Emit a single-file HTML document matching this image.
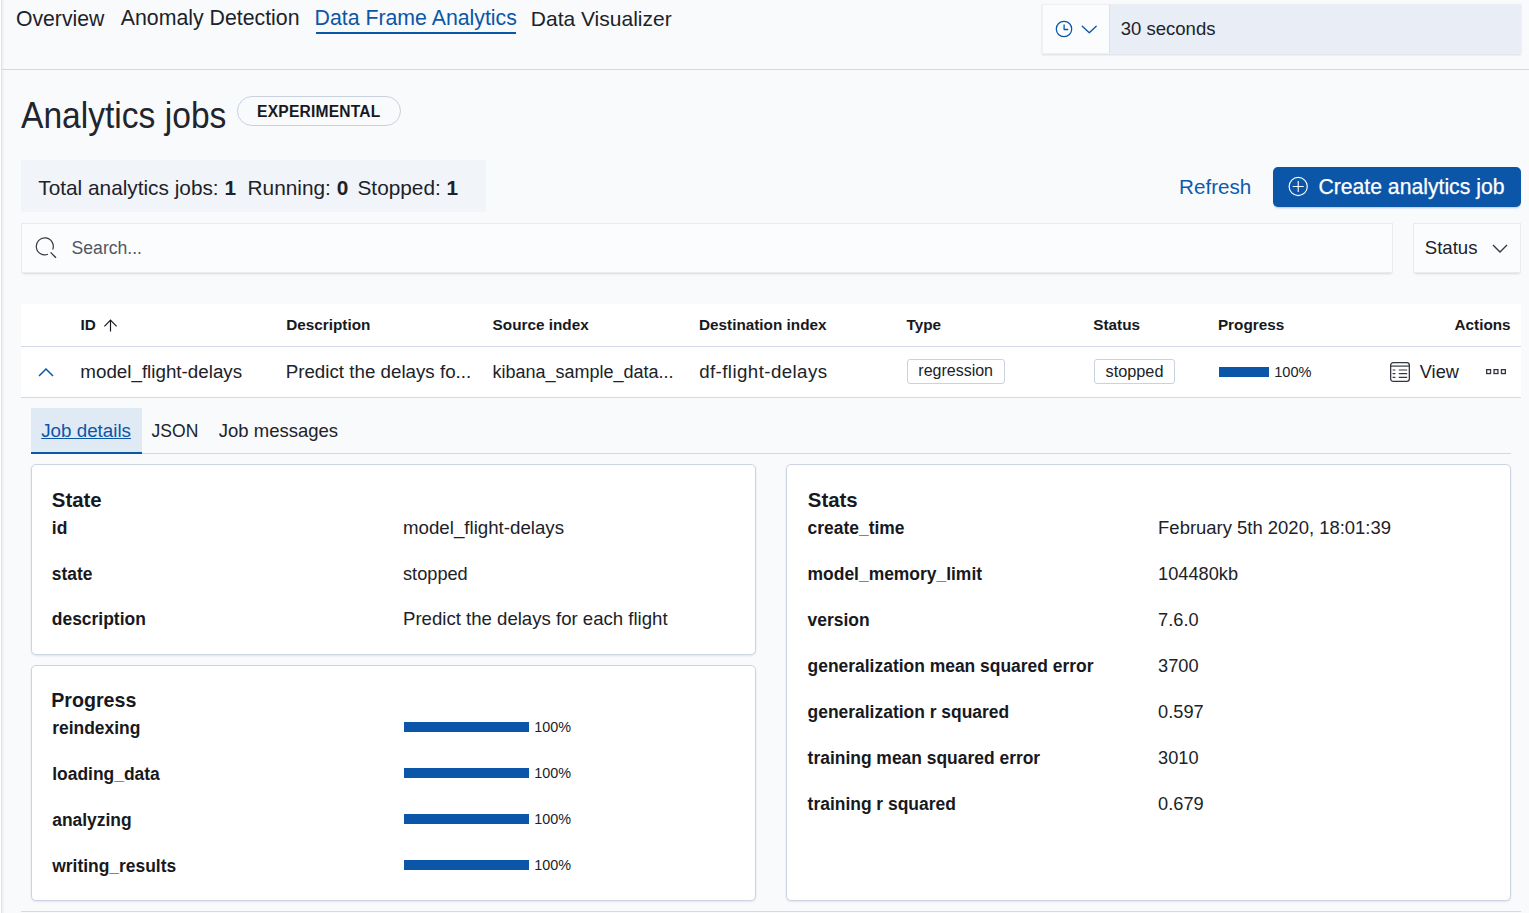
<!DOCTYPE html>
<html><head><meta charset="utf-8"><style>
html,body{margin:0;padding:0;}
body{width:1529px;height:913px;overflow:hidden;position:relative;background:#F9FAFC;font-family:"Liberation Sans",sans-serif;-webkit-font-smoothing:antialiased;}
.t{position:absolute;line-height:1;white-space:nowrap;}
.r{position:absolute;}
</style></head><body>
<div class="r" style="left:0px;top:0px;width:1px;height:913px;background:#fff"></div>
<div class="r" style="left:1px;top:0px;width:1px;height:913px;background:#DFE3EA"></div>
<div class="r" style="left:2px;top:0px;width:3px;height:913px;background:linear-gradient(90deg,rgba(152,162,179,.12),rgba(152,162,179,0))"></div>
<div class="t" style="left:16.00px;top:7.95px;font-size:21.2px;font-weight:400;color:#202229;">Overview</div>
<div class="t" style="left:120.80px;top:7.87px;font-size:21.3px;font-weight:400;color:#202229;">Anomaly Detection</div>
<div class="t" style="left:314.50px;top:7.87px;font-size:21.3px;font-weight:400;color:#0B56A8;">Data Frame Analytics</div>
<div class="r" style="left:316px;top:32px;width:200px;height:2px;background:#0B56A8"></div>
<div class="t" style="left:530.80px;top:8.12px;font-size:21px;font-weight:400;color:#202229;">Data Visualizer</div>
<div class="r" style="left:1042px;top:4px;width:479px;height:50px;background:#FBFCFD;box-shadow:0 1px 2px rgba(152,162,179,.35), inset 0 0 0 1px rgba(32,38,47,.06)"></div>
<div class="r" style="left:1109px;top:5px;width:412px;height:48px;background:#E9EDF5"></div>
<div class="r" style="left:1109px;top:5px;width:1px;height:48px;background:#DCE1EA"></div>
<svg class="r" style="left:1054.8px;top:20.1px" width="18" height="18" viewBox="0 0 18 18"><circle cx="9" cy="9" r="7.7" fill="none" stroke="#0B56A8" stroke-width="1.25"/><path d="M9.1 5V9.5H12.8" fill="none" stroke="#0B56A8" stroke-width="1.3" stroke-linecap="round" stroke-linejoin="round"/></svg>
<svg class="r" style="left:1080.5px;top:24.7px" width="17" height="10" viewBox="0 0 17 10"><path d="M1.3 1.3L8.3 7.8L15.2 1.3" fill="none" stroke="#0B56A8" stroke-width="1.35" stroke-linecap="round" stroke-linejoin="round"/></svg>
<div class="t" style="left:1120.80px;top:20.14px;font-size:18.5px;font-weight:400;color:#202229;">30 seconds</div>
<div class="r" style="left:1px;top:69px;width:1528px;height:1px;background:#D3DAE6"></div>
<div class="t" style="left:21.40px;top:97.73px;font-size:36px;font-weight:400;color:#22252c;transform:scaleX(0.933);transform-origin:0 0">Analytics jobs</div>
<div class="r" style="left:237px;top:96px;width:164px;height:30px;border:1px solid #C9D1DF;border-radius:15px;box-sizing:border-box"></div>
<div class="t" style="left:257.10px;top:103.69px;font-size:15.6px;font-weight:700;color:#17191E;letter-spacing:0.2px">EXPERIMENTAL</div>
<div class="r" style="left:21px;top:160px;width:465px;height:52px;background:#F1F4F9"></div>
<div class="t" style="left:38.30px;top:177.89px;font-size:20.8px;font-weight:400;color:#202229;">Total analytics jobs: <b>1</b></div>
<div class="t" style="left:247.60px;top:177.89px;font-size:20.8px;font-weight:400;color:#202229;">Running: <b>0</b></div>
<div class="t" style="left:357.50px;top:177.89px;font-size:20.8px;font-weight:400;color:#202229;">Stopped: <b>1</b></div>
<div class="t" style="left:1179.10px;top:176.66px;font-size:20.6px;font-weight:400;color:#0B5CAD;">Refresh</div>
<div class="r" style="left:1273px;top:167px;width:248px;height:40px;background:#0B56A8;border-radius:5px;box-shadow:0 2px 2px -1px rgba(11,86,168,.3)"></div>
<svg class="r" style="left:1288px;top:176px" width="21" height="21" viewBox="0 0 21 21"><circle cx="10.2" cy="10.5" r="9.1" fill="none" stroke="#fff" stroke-width="1.15"/><path d="M10.2 5V16M4.7 10.5H15.7" stroke="#fff" stroke-width="1.1"/></svg>
<div class="t" style="left:1318.40px;top:176.45px;font-size:21.2px;font-weight:400;color:#fff;-webkit-text-stroke:0.25px #fff">Create analytics job</div>
<div class="r" style="left:21px;top:223px;width:1372px;height:50px;background:#FBFCFD;box-shadow:0 1px 1px -1px rgba(152,162,179,.2),0 3px 2px -2px rgba(152,162,179,.35),inset 0 0 0 1px rgba(32,38,47,.08)"></div>
<svg class="r" style="left:35px;top:237px" width="24" height="24" viewBox="0 0 24 24"><path d="M17.68 12.58A8.5 8.5 0 1 0 12.98 17.28" fill="none" stroke="#343741" stroke-width="1.2"/><path d="M15.6 15.4L21 20.8" stroke="#343741" stroke-width="1.3"/></svg>
<div class="t" style="left:71.60px;top:240.30px;font-size:17.6px;font-weight:400;color:#505663;">Search...</div>
<div class="r" style="left:1413px;top:223px;width:108px;height:50px;background:#FBFCFD;box-shadow:0 1px 1px -1px rgba(152,162,179,.2),0 3px 2px -2px rgba(152,162,179,.35),inset 0 0 0 1px rgba(32,38,47,.08)"></div>
<div class="t" style="left:1424.80px;top:239.16px;font-size:18.6px;font-weight:400;color:#202229;">Status</div>
<svg class="r" style="left:1492px;top:243.5px" width="16" height="10" viewBox="0 0 16 10"><path d="M1 1L8 8L15 1" fill="none" stroke="#343741" stroke-width="1.4"/></svg>
<div class="r" style="left:21px;top:304px;width:1500px;height:94px;background:#fff"></div>
<div class="r" style="left:21px;top:346px;width:1500px;height:1px;background:#D3DAE6"></div>
<div class="r" style="left:21px;top:397px;width:1500px;height:1px;background:#D3DAE6"></div>
<div class="t" style="left:80.50px;top:317.15px;font-size:15.3px;font-weight:700;color:#17191E;">ID</div>
<div class="t" style="left:286.20px;top:317.15px;font-size:15.3px;font-weight:700;color:#17191E;">Description</div>
<div class="t" style="left:492.60px;top:317.15px;font-size:15.3px;font-weight:700;color:#17191E;">Source index</div>
<div class="t" style="left:699.00px;top:317.15px;font-size:15.3px;font-weight:700;color:#17191E;">Destination index</div>
<div class="t" style="left:906.50px;top:317.15px;font-size:15.3px;font-weight:700;color:#17191E;">Type</div>
<div class="t" style="left:1093.30px;top:317.15px;font-size:15.3px;font-weight:700;color:#17191E;">Status</div>
<div class="t" style="left:1217.90px;top:317.15px;font-size:15.3px;font-weight:700;color:#17191E;">Progress</div>
<div class="t" style="left:1454.50px;top:317.15px;font-size:15.3px;font-weight:700;color:#17191E;">Actions</div>
<svg class="r" style="left:103px;top:318.5px" width="15" height="13" viewBox="0 0 15 13"><path d="M7.5 12.5V1.2M1.4 7.3L7.5 1.2L13.6 7.3" fill="none" stroke="#1A1C21" stroke-width="1.2"/></svg>
<svg class="r" style="left:37.8px;top:366.6px" width="16" height="10" viewBox="0 0 16 10"><path d="M1 9L8 2L15 9" fill="none" stroke="#0B56A8" stroke-width="1.5"/></svg>
<div class="t" style="left:80.30px;top:362.69px;font-size:18.8px;font-weight:400;color:#202229;">model_flight-delays</div>
<div class="t" style="left:285.70px;top:362.73px;font-size:18.75px;font-weight:400;color:#202229;">Predict the delays fo...</div>
<div class="t" style="left:492.40px;top:363.36px;font-size:18px;font-weight:400;color:#202229;">kibana_sample_data...</div>
<div class="t" style="left:699.20px;top:362.77px;font-size:18.7px;font-weight:400;color:#202229;letter-spacing:0.42px">df-flight-delays</div>
<div class="r" style="left:907px;top:359px;width:98px;height:25px;border:1px solid #CAD2E0;border-radius:3px;box-sizing:border-box;background:#fff"></div>
<div class="t" style="left:918.30px;top:363.46px;font-size:16px;font-weight:400;color:#202229;">regression</div>
<div class="r" style="left:1094px;top:359px;width:81px;height:25px;border:1px solid #CAD2E0;border-radius:3px;box-sizing:border-box;background:#fff"></div>
<div class="t" style="left:1105.50px;top:363.20px;font-size:16.3px;font-weight:400;color:#202229;">stopped</div>
<div class="r" style="left:1219px;top:367px;width:50px;height:10px;background:#0B56A8"></div>
<div class="t" style="left:1274.20px;top:364.54px;font-size:14.6px;font-weight:400;color:#202229;">100%</div>
<svg class="r" style="left:1390px;top:362px" width="20" height="20" viewBox="0 0 20 20"><rect x="0.65" y="0.65" width="18.7" height="18.7" rx="2.6" fill="none" stroke="#343741" stroke-width="1.3"/><path d="M0.8 4.1H19.2" stroke="#343741" stroke-width="1.2"/><path d="M2.6 8H5.4M8.8 8H17.2M2.6 11.6H5.4M8.8 11.6H17.2M2.6 15.4H5.4M8.8 15.4H17.2" stroke="#343741" stroke-width="1.1"/></svg>
<div class="t" style="left:1419.80px;top:362.59px;font-size:18.2px;font-weight:400;color:#202229;">View</div>
<svg class="r" style="left:1486px;top:369.4px" width="21" height="6" viewBox="0 0 21 6"><rect x="0.65" y="0.65" width="3.9" height="3.9" fill="none" stroke="#343741" stroke-width="1.3"/><rect x="8.05" y="0.65" width="3.9" height="3.9" fill="none" stroke="#343741" stroke-width="1.3"/><rect x="15.45" y="0.65" width="3.9" height="3.9" fill="none" stroke="#343741" stroke-width="1.3"/></svg>
<div class="r" style="left:31px;top:408px;width:111px;height:46px;background:#E0EAF5"></div>
<div class="r" style="left:31px;top:453px;width:1480px;height:1px;background:#D3DAE6"></div>
<div class="r" style="left:31px;top:452px;width:111px;height:2px;background:#0B56A8"></div>
<div class="t" style="left:41.20px;top:422.29px;font-size:18.8px;font-weight:400;color:#0B56A8;text-decoration:underline;text-underline-offset:1px">Job details</div>
<div class="t" style="left:151.60px;top:422.99px;font-size:17.5px;font-weight:400;color:#202229;">JSON</div>
<div class="t" style="left:218.80px;top:422.14px;font-size:18.5px;font-weight:400;color:#202229;">Job messages</div>
<div class="r" style="left:31px;top:464px;width:725px;height:191px;background:#fff;border:1px solid #CDD4E1;border-radius:5px;box-sizing:border-box;box-shadow:0 1px 2px rgba(152,162,179,.25)"></div>
<div class="r" style="left:31px;top:665px;width:725px;height:236px;background:#fff;border:1px solid #CDD4E1;border-radius:5px;box-sizing:border-box;box-shadow:0 1px 2px rgba(152,162,179,.25)"></div>
<div class="r" style="left:786px;top:464px;width:725px;height:437px;background:#fff;border:1px solid #CDD4E1;border-radius:5px;box-sizing:border-box;box-shadow:0 1px 2px rgba(152,162,179,.25)"></div>
<div class="t" style="left:51.80px;top:489.53px;font-size:20.4px;font-weight:700;color:#17191E;">State</div>
<div class="t" style="left:51.80px;top:519.83px;font-size:17.45px;font-weight:700;color:#17191E;">id</div>
<div class="t" style="left:403.00px;top:518.77px;font-size:18.7px;font-weight:400;color:#202229;">model_flight-delays</div>
<div class="t" style="left:51.80px;top:565.63px;font-size:17.45px;font-weight:700;color:#17191E;">state</div>
<div class="t" style="left:403.00px;top:564.99px;font-size:18.2px;font-weight:400;color:#202229;">stopped</div>
<div class="t" style="left:51.80px;top:611.43px;font-size:17.45px;font-weight:700;color:#17191E;">description</div>
<div class="t" style="left:403.00px;top:610.46px;font-size:18.6px;font-weight:400;color:#202229;">Predict the delays for each flight</div>
<div class="t" style="left:51.20px;top:691.17px;font-size:19.65px;font-weight:700;color:#17191E;">Progress</div>
<div class="t" style="left:52.20px;top:720.43px;font-size:17.45px;font-weight:700;color:#17191E;">reindexing</div>
<div class="r" style="left:404px;top:722px;width:125px;height:10px;background:#0B56A8"></div>
<div class="t" style="left:534.30px;top:720.31px;font-size:14.4px;font-weight:400;color:#202229;">100%</div>
<div class="t" style="left:52.20px;top:766.18px;font-size:17.45px;font-weight:700;color:#17191E;">loading_data</div>
<div class="r" style="left:404px;top:768px;width:125px;height:10px;background:#0B56A8"></div>
<div class="t" style="left:534.30px;top:766.21px;font-size:14.4px;font-weight:400;color:#202229;">100%</div>
<div class="t" style="left:52.20px;top:811.93px;font-size:17.45px;font-weight:700;color:#17191E;">analyzing</div>
<div class="r" style="left:404px;top:814px;width:125px;height:10px;background:#0B56A8"></div>
<div class="t" style="left:534.30px;top:812.11px;font-size:14.4px;font-weight:400;color:#202229;">100%</div>
<div class="t" style="left:52.20px;top:857.68px;font-size:17.45px;font-weight:700;color:#17191E;">writing_results</div>
<div class="r" style="left:404px;top:860px;width:125px;height:10px;background:#0B56A8"></div>
<div class="t" style="left:534.30px;top:858.01px;font-size:14.4px;font-weight:400;color:#202229;">100%</div>
<div class="t" style="left:807.80px;top:489.53px;font-size:20.4px;font-weight:700;color:#17191E;">Stats</div>
<div class="t" style="left:807.60px;top:519.83px;font-size:17.45px;font-weight:700;color:#17191E;">create_time</div>
<div class="t" style="left:1158.10px;top:518.97px;font-size:18.47px;font-weight:400;color:#202229;">February 5th 2020, 18:01:39</div>
<div class="t" style="left:807.60px;top:565.78px;font-size:17.45px;font-weight:700;color:#17191E;">model_memory_limit</div>
<div class="t" style="left:1158.10px;top:565.14px;font-size:18.2px;font-weight:400;color:#202229;">104480kb</div>
<div class="t" style="left:807.60px;top:611.73px;font-size:17.45px;font-weight:700;color:#17191E;">version</div>
<div class="t" style="left:1158.10px;top:611.09px;font-size:18.2px;font-weight:400;color:#202229;">7.6.0</div>
<div class="t" style="left:807.60px;top:657.68px;font-size:17.45px;font-weight:700;color:#17191E;">generalization mean squared error</div>
<div class="t" style="left:1158.10px;top:657.04px;font-size:18.2px;font-weight:400;color:#202229;">3700</div>
<div class="t" style="left:807.60px;top:703.63px;font-size:17.45px;font-weight:700;color:#17191E;">generalization r squared</div>
<div class="t" style="left:1158.10px;top:702.99px;font-size:18.2px;font-weight:400;color:#202229;">0.597</div>
<div class="t" style="left:807.60px;top:749.58px;font-size:17.45px;font-weight:700;color:#17191E;">training mean squared error</div>
<div class="t" style="left:1158.10px;top:748.94px;font-size:18.2px;font-weight:400;color:#202229;">3010</div>
<div class="t" style="left:807.60px;top:795.53px;font-size:17.45px;font-weight:700;color:#17191E;">training r squared</div>
<div class="t" style="left:1158.10px;top:794.89px;font-size:18.2px;font-weight:400;color:#202229;">0.679</div>
<div class="r" style="left:21px;top:911px;width:1500px;height:1px;background:#D3DAE6"></div>
</body></html>
